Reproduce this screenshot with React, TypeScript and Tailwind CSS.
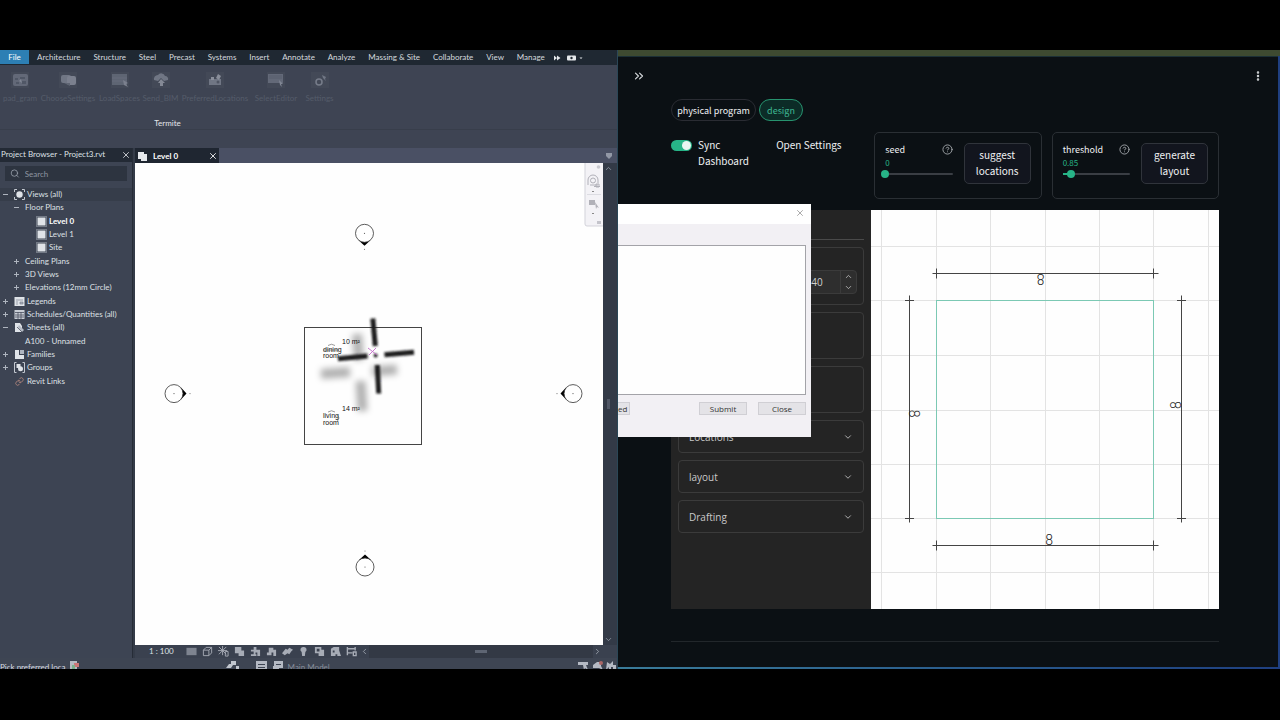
import { useState, type ReactNode } from "react";
import {
  ChevronDown,
  ChevronLeft,
  ChevronRight,
  ChevronUp,
  ChevronsRight,
  CircleQuestionMark,
  EllipsisVertical,
  Link,
  Search,
  X,
} from "lucide-react";

const menus = [
  "Architecture",
  "Structure",
  "Steel",
  "Precast",
  "Systems",
  "Insert",
  "Annotate",
  "Analyze",
  "Massing & Site",
  "Collaborate",
  "View",
  "Manage",
];

type Glyph =
  | "grid"
  | "chat"
  | "table"
  | "cloud"
  | "pin"
  | "screen"
  | "gear";

const tools: { label: string; glyph: Glyph; width: string }[] = [
  { label: "pad_gram", glyph: "grid", width: "w-[38px]" },
  { label: "ChooseSettings", glyph: "chat", width: "w-[58px]" },
  { label: "LoadSpaces", glyph: "table", width: "w-[45px]" },
  { label: "Send_BIM", glyph: "cloud", width: "w-[37px]" },
  { label: "PreferredLocations", glyph: "pin", width: "w-[72px]" },
  { label: "SelectEditor", glyph: "screen", width: "w-[50px]" },
  { label: "Settings", glyph: "gear", width: "w-[37px]" },
];

function ToolGlyph({ glyph }: { glyph: Glyph }) {
  return (
    <svg viewBox="0 0 18 16" className="h-4 w-[18px] opacity-80" fill="#7d8391">
      <rect width="18" height="16" fill="#454b59" />
      {glyph === "grid" && (
        <>
          <rect x="2" y="2" width="15" height="12" rx="2" fill="#6d7382" />
          <path d="M4 6h3v2H4zM9 5h5v2H9zM5 10h3v2H5zM11 9h4v3h-4z" fill="#555c6b" />
          <path d="M8 9l2-2 1 4z" fill="#9298a5" />
        </>
      )}
      {glyph === "chat" && (
        <>
          <rect x="2" y="3" width="10" height="8" rx="2" />
          <rect x="8" y="4" width="9" height="9" rx="2" fill="#8b909d" />
          <path d="M5 11h6v3z" fill="#686e7c" />
        </>
      )}
      {glyph === "table" && (
        <>
          <rect x="1" y="2" width="15" height="11" fill="#676e7c" />
          <path d="M1 6h15M1 9h15" stroke="#757b89" strokeWidth=".7" />
          <path d="M12 8l5 3-2 1 2 3-4-2z" fill="#8b909d" />
        </>
      )}
      {glyph === "cloud" && (
        <>
          <path d="M2 8a4 4 0 014-5 4 4 0 017 1 3 3 0 013 4l-4 1-3-3-3 3z" />
          <path d="M9 7l4 4h-2v3H8v-3H6z" fill="#969ba6" />
        </>
      )}
      {glyph === "pin" && (
        <>
          <rect x="3" y="7" width="12" height="6" />
          <path d="M5 5h3v3H5zM12 2l3 2-2 4-3-2z" fill="#9ca1ac" />
          <circle cx="12" cy="10" r="1.5" fill="#545a68" />
        </>
      )}
      {glyph === "screen" && (
        <>
          <rect x="1" y="2" width="15" height="9" fill="#6d7382" />
          <path d="M2 4h13M2 6h13" stroke="#5f6573" />
          <path d="M12 8l4 4-2 0 1 3-2-2z" fill="#9298a5" />
        </>
      )}
      {glyph === "gear" && (
        <>
          <circle cx="8" cy="10" r="3" fill="none" stroke="#858b98" strokeWidth="1.5" />
          <path d="M11 3l4 2-1 2 1 2-3-3z" />
        </>
      )}
    </svg>
  );
}

function MenuBar() {
  return (
    <nav className="flex h-[15px] items-start bg-[#1f2832] text-[8px] leading-[15px] text-[#d5d9de]">
      <button className="h-[14px] w-[29px] bg-[#2d7fb4] text-white">File</button>
      <div className="flex flex-1 justify-between pl-2 pr-2">
        {menus.map((m) => (
          <button key={m} className="whitespace-nowrap">
            {m}
          </button>
        ))}
      </div>
      <div className="flex h-full items-center gap-[5px] pr-[33px]">
        <svg viewBox="0 0 8 6" className="h-[6px] w-2" fill="#e5e8eb">
          <path d="M1 .5L4 3 1 5.500zM4 .5L7.500 3 4 5.500z" />
        </svg>
        <svg viewBox="0 0 18 6" className="h-[6px] w-[18px]">
          <rect x="1" y=".5" width="9" height="5" rx="1" fill="#e5e8eb" />
          <circle cx="5.500" cy="3" r="1.200" fill="#1f2832" />
          <path d="M13.500 2.500h3L15 4z" fill="#e5e8eb" />
        </svg>
      </div>
    </nav>
  );
}

function Ribbon() {
  return (
    <section className="flex h-[83px] flex-col bg-[#3e4453]">
      <div className="flex h-[65px] flex-col border-b border-[#383e4b]">
        <div className="flex flex-1 pl-px pt-[7px]">
          {tools.map((t) => (
            <button
              key={t.label}
              className={`flex flex-col items-center text-[8px] leading-[10px] text-[#555c6a] ${t.width}`}
            >
              <ToolGlyph glyph={t.glyph} />
              <span className="mt-[5px]">{t.label}</span>
            </button>
          ))}
        </div>
        <div className="w-[335px] text-center text-[8px] leading-[11px] text-[#e3e6ea]">Termite</div>
      </div>
    </section>
  );
}

type NodeIcon = "views" | "plan" | "legend" | "schedule" | "sheet" | "family" | "group" | "link";

const tree: { label: string; level: 0 | 1 | 2; mark?: "+" | "-"; icon?: NodeIcon; bold?: boolean }[] = [
  { label: "Views (all)", level: 0, mark: "-", icon: "views" },
  { label: "Floor Plans", level: 1, mark: "-" },
  { label: "Level 0", level: 2, icon: "plan", bold: true },
  { label: "Level 1", level: 2, icon: "plan" },
  { label: "Site", level: 2, icon: "plan" },
  { label: "Ceiling Plans", level: 1, mark: "+" },
  { label: "3D Views", level: 1, mark: "+" },
  { label: "Elevations (12mm Circle)", level: 1, mark: "+" },
  { label: "Legends", level: 0, mark: "+", icon: "legend" },
  { label: "Schedules/Quantities (all)", level: 0, mark: "+", icon: "schedule" },
  { label: "Sheets (all)", level: 0, mark: "-", icon: "sheet" },
  { label: "A100 - Unnamed", level: 1 },
  { label: "Families", level: 0, mark: "+", icon: "family" },
  { label: "Groups", level: 0, mark: "+", icon: "group" },
  { label: "Revit Links", level: 0, icon: "link" },
];

const indent = { 0: "pl-[2px]", 1: "pl-[13px]", 2: "pl-[25px]" };

function TreeIcon({ icon }: { icon: NodeIcon }) {
  if (icon === "link") return <Link className="mx-[1px] h-[9px] w-[9px] text-[#c08f83]" />;
  return (
    <svg viewBox="0 0 11 11" className="h-[11px] w-[11px] shrink-0" fill="#dfe3e8">
      {icon === "views" && (
        <>
          <circle cx="5.500" cy="5.500" r="3.200" />
          <path d="M.5 3V.5H3M8 .5h2.500V3M10.500 8v2.500H8M3 10.500H.5V8" fill="none" stroke="#c3c8d0" />
        </>
      )}
      {icon === "plan" && (
        <>
          <rect x="1.500" y="1.500" width="8" height="8" />
          <rect x=".5" y=".5" width="10" height="10" fill="none" stroke="#aab0ba" strokeDasharray="1 1" />
        </>
      )}
      {icon === "legend" && (
        <>
          <rect x=".5" y="1" width="10" height="9" />
          <path d="M2 4h7M2 6h2M2 8h2M6 6h3v2H6z" stroke="#7b8290" strokeWidth=".7" fill="#aab0ba" />
        </>
      )}
      {icon === "schedule" && (
        <>
          <rect x=".5" y="1" width="10" height="9" fill="#c9ced6" />
          <path d="M1 3.500h9M1 6h9M1 8h9M4 3v7M7 3v7" stroke="#4b5261" strokeWidth=".8" />
        </>
      )}
      {icon === "sheet" && (
        <>
          <path d="M1 1h5l2 3v6H1z" />
          <path d="M5 3l5 5-2 2-4-5z" fill="#b5bbc5" />
          <path d="M3 5l5 5" stroke="#4b5261" strokeWidth=".8" />
        </>
      )}
      {icon === "family" && (
        <>
          <path d="M1 1h4v5h5v4H1z" />
          <rect x="6" y="1" width="4" height="4" fill="#aeb5c0" />
        </>
      )}
      {icon === "group" && (
        <>
          <path d="M2.500 .5h-2v10h2M8.500 .5h2v10h-2" fill="none" stroke="#c3c8d0" />
          <rect x="2.500" y="2" width="4" height="4" />
          <circle cx="6.500" cy="6.800" r="2.500" />
        </>
      )}
    </svg>
  );
}

function ProjectBrowser() {
  return (
    <aside className="flex w-[133px] shrink-0 flex-col border-r border-[#262c37] bg-[#3d4453] text-[8px] text-[#dde0e5]">
      <header className="flex h-[14px] items-start justify-between bg-[#232a35] px-px leading-[13px]">
        <span className="whitespace-nowrap">Project Browser - Project3.rvt</span>
        <button aria-label="Close project browser" className="pt-[2px]">
          <X className="h-[10px] w-[10px]" />
        </button>
      </header>
      <label className="mx-[5px] mt-1 flex h-[15px] items-center gap-[5px] bg-[#2d3440] pl-[5px]">
        <Search className="h-[11px] w-[11px] text-[#9aa1ad]" />
        <input
          type="text"
          aria-label="Search"
          placeholder="Search"
          className="w-full bg-transparent leading-[14px] outline-none placeholder:text-[#8e95a1]"
        />
      </label>
      <ul className="mt-[7px] flex h-[200px] flex-col">
        {tree.map((n, i) => (
          <li
            key={n.label}
            className={`flex min-h-0 flex-1 items-center leading-[13px] ${indent[n.level]} ${i === 0 ? "bg-[#363d4a]" : ""}`}
          >
            {n.level < 2 && (
              <svg viewBox="0 0 7 7" className="mr-[5px] h-[7px] w-[7px] shrink-0" stroke="#aeb4be">
                {n.mark && <path d="M1 3.500h5" />}
                {n.mark === "+" && <path d="M3.500 1v5" />}
              </svg>
            )}
            {n.icon && (
              <span className={n.level === 2 ? "ml-[11px] mr-[2px]" : "mr-[2px]"}>
                <TreeIcon icon={n.icon} />
              </span>
            )}
            <span className={`whitespace-nowrap ${n.bold ? "font-bold text-white" : ""}`}>{n.label}</span>
          </li>
        ))}
      </ul>
    </aside>
  );
}

function Elevation({ x, y, turn }: { x: number; y: number; turn: number }) {
  return (
    <g transform={`translate(${x} ${y}) rotate(${turn})`}>
      <path d="M-6 7Q0 8 6 7L0 12.500z" fill="#000" />
      <circle r="9" fill="#fff" stroke="#333" strokeWidth=".8" />
      <circle r=".6" fill="#555" />
      <circle cy="16" r=".6" fill="#777" />
    </g>
  );
}

function PlanCanvas() {
  return (
    <svg
      viewBox="135 163 468 482"
      preserveAspectRatio="xMidYMid meet"
      className="block min-h-[482px] w-full flex-1 bg-[#fefefe]"
      role="img"
      aria-label="Level 0 floor plan"
    >
      <defs>
        <filter id="soft" x="-50%" y="-50%" width="200%" height="200%">
          <feGaussianBlur stdDeviation="3" />
        </filter>
        <filter id="edge" x="-50%" y="-50%" width="200%" height="200%">
          <feGaussianBlur stdDeviation="0.900" />
        </filter>
      </defs>
      <Elevation x={364.5} y={233.300} turn={0} />
      <Elevation x={174} y={393.600} turn={-90} />
      <Elevation x={573} y={393.600} turn={90} />
      <Elevation x={365} y={567} turn={180} />
      <rect x="304.500" y="327.500" width="117" height="117" fill="none" stroke="#444" />
      <g filter="url(#soft)" stroke="#000" strokeOpacity=".3" strokeWidth="10">
        <path d="M357 334L359 360M360.500 381L362.500 411M321 374L350 372M372 371.500L397 369.500" />
      </g>
      <g filter="url(#edge)" stroke="#1a1a1c" strokeWidth="5">
        <path d="M372.800 318.500L375.300 346M377.300 365L378.700 393.500M338 358.800L367.500 356M384.500 354.800L414 352.300" />
        <circle cx="375.600" cy="355.500" r="1" strokeWidth="2" />
      </g>
      <path d="M368 348l9 7M376 348l-7 7" stroke="#c26bc8" strokeWidth=".9" />
      <g fill="#111" fontFamily="'Liberation Sans Narrow', 'Liberation Sans', sans-serif" fontSize="7">
        <text x="342" y="343.500">10 m²</text>
        <text x="323" y="351.500">dining</text>
        <text x="323" y="357.500">room</text>
        <text x="342" y="410.500">14 m²</text>
        <text x="323" y="418">living</text>
        <text x="323" y="424.500">room</text>
      </g>
      <g fill="none" stroke="#555" strokeWidth=".6">
        <path d="M328 345.500Q331.500 343 335 345.500M323 350h16M328 412Q331.500 409.500 335 412M337.500 415q3 3 0 6" />
      </g>
      <g>
        <rect x="585" y="160" width="20" height="66" rx="2" fill="#f3f2f6" stroke="#d3d3da" />
        <circle cx="598.500" cy="167" r="1.800" fill="#c9c9d0" />
        <g fill="none" stroke="#b0b0b8">
          <path d="M588 185v-5a5 5 0 0110 0v3M590 185h8" />
          <circle cx="593" cy="180.500" r="2.500" />
          <path d="M594 186.500h6M596 184h3v3h-3z" />
        </g>
        <path d="M587 194.500h14" stroke="#dcdce2" />
        <path d="M589 200h6v5h-6zM595 202l4 6-2-1-1 2z" fill="#b1b1b8" />
        <path d="M592 191h2v1h-2zM592 213h2v1h-2z" fill="#888" />
        <rect x="597" y="221" width="4" height="3" fill="#c4c4cb" />
      </g>
    </svg>
  );
}

const viewControls: ReactNode[] = [
  <rect key="a" x=".5" y="2" width="11" height="8" fill="#7e8490" />,
  <path key="b" d="M1.500 4.500h6v6h-6zM1.500 4.500l3-3h6l-3 3M10.500 1.500v6l-3 3" stroke="#a7acb6" fill="none" />,
  <path key="c" d="M5 0v10M0 5h10M1 1l8 8M9 1L1 9M8 6h3v5H8z" stroke="#a7acb6" fill="none" />,
  <path key="d" d="M1 1h7v7H1zM7 5h4v6H5V8h2z" />,
  <path key="e" d="M4 1h3v3h4v7H8V7H6v2h1v2H1V9h3V6H1V4h3z" />,
  <path key="f" d="M3 2h5v2h3v7H8V7H6v3H1V7h2z" />,
  <path key="g" d="M0 8l4-5 2 1 2-2 4 2-2 2-2 3-2-1-3 2z" />,
  <path key="h" d="M6 1a3 3 0 012 5.500L7.500 11h-3L4 6.500A3 3 0 016 1z" />,
  <path key="i" d="M1 1h7v3h3v7H5V8H1zM3 3v3h3V3z" fillRule="evenodd" />,
  <path key="j" d="M1 3l3-2h6v4l2 6H8V9H6v2H1zM3 5v2h2V5z" fillRule="evenodd" />,
  <path key="k" d="M1.500 1v9M1 3h9M1 7.500h6M10 1v4M8 6.500h3v4H8z" stroke="#a7acb6" strokeWidth="1.500" fill="none" />,
];

function ViewBar() {
  return (
    <div className="flex h-[13px] items-center bg-[#3a414f] text-[8px] leading-[13px] text-[#dfe2e7]">
      <span className="w-[51px] pl-[14px]">1 : 100</span>
      <div className="flex gap-1">
        {viewControls.map((g, i) => (
          <button key={i} aria-label={`View control ${i + 1}`} className="h-3 w-3">
            <svg viewBox="0 0 12 12" className="h-[11px] w-[11px]" fill="#a7acb6">
              {g}
            </svg>
          </button>
        ))}
      </div>
      <div className="flex h-full flex-1 items-center justify-between pl-[2px] pr-[15px] text-[#aab0ba]">
        <ChevronLeft className="h-[9px] w-[9px]" />
        <span className="h-full flex-1 bg-[#333945] pt-[5px]">
          <span className="mx-auto block h-[3px] w-3 bg-[#5e6573]" />
        </span>
        <ChevronRight className="h-[9px] w-[9px]" />
      </div>
    </div>
  );
}

function StatusBar() {
  return (
    <footer className="flex h-[11px] items-start overflow-hidden bg-[#3e4553] pt-[3px] text-[8px] leading-[12px] text-[#d7dae0]">
      <span className="whitespace-nowrap">Pick preferred loca</span>
      <svg viewBox="0 0 11 10" className="ml-[3px] h-[10px] w-[11px]">
        <path d="M1 0h7v9H1z" fill="#b6bac2" />
        <path d="M5 2h5v4H5z" fill="#c77" />
        <path d="M3 4h3v4H3z" fill="#7ab08c" />
      </svg>
      <svg viewBox="0 0 14 10" className="ml-[146px] h-[10px] w-[14px]" fill="#c1c6ce">
        <path d="M5 0h5v4H7L5 7H0l3-4h2zM10 5h3v4h-3z" />
      </svg>
      <svg viewBox="0 0 28 10" className="ml-[16px] h-[10px] w-7" fill="#b5bac4">
        <path d="M0 0h11v9H0zM2 3h7v1H2zM2 6h7v1H2zM18 0h9v7h-4v2h-6V5h1zM20 3h5v1h-5z" fillRule="evenodd" />
      </svg>
      <span className="ml-1 flex-1 text-[#868d9a]">Main Model</span>
      <svg viewBox="0 0 46 10" className="h-[10px] w-[46px]" fill="#b5bac4">
        <path d="M7 1h10v3h-2l2 5-3-2-1 2-1-5H7zM22 4l4-3h4v4l2 4-4-2h-6zM36 1l3 2 3-3v4h3v5h-3V6h-2v3h-2V6l-3 3z" />
        <circle cx="30" cy="2" r="2" fill="#a66" />
      </svg>
    </footer>
  );
}

function ModelingApp() {
  return (
    <section className="flex min-w-0 flex-col overflow-hidden bg-[#343b48] font-[Lato,sans-serif]">
      <MenuBar />
      <Ribbon />
      <div className="flex flex-1">
        <ProjectBrowser />
        <div className="flex min-w-0 flex-1 flex-col pl-[2px]">
          <div className="flex h-[15px] items-center justify-between bg-[#4a5064] pr-[5px]">
            <div className="flex h-full w-[84px] items-center bg-[#1f2631] pl-[3px] text-[8px] font-bold text-white">
              <svg viewBox="0 0 10 10" className="mr-[5px] h-[10px] w-[10px]" fill="#e6e9ed">
                <path d="M0 1h6v2h3v7H3V8H0z" />
              </svg>
              <span className="flex-1">Level 0</span>
              <button aria-label="Close Level 0" className="mr-px">
                <X className="h-[10px] w-[10px]" />
              </button>
            </div>
            <svg viewBox="0 0 6 6" className="h-[6px] w-[6px]" fill="#9298a6">
              <path d="M0 0h6v3L3 6 0 3z" />
            </svg>
          </div>
          <div className="flex flex-1">
            <PlanCanvas />
            <div className="flex w-[14px] shrink-0 flex-col items-center justify-between bg-[#333a47] py-[1px] pr-[3px] text-[#9aa1ad]">
              <ChevronUp className="h-[9px] w-[9px]" />
              <span className="h-[10px] w-[3px] bg-[#505766]" />
              <ChevronDown className="h-[9px] w-[9px]" />
            </div>
          </div>
          <ViewBar />
        </div>
      </div>
      <StatusBar />
    </section>
  );
}

function SliderCard({
  id,
  label,
  initial,
  max,
  step,
  action,
}: {
  id: string;
  label: string;
  initial: number;
  max: number;
  step: number;
  action: string;
}) {
  const [value, setValue] = useState(initial);
  return (
    <div className="flex gap-[11px] rounded-[5px] border border-[#2a2f34] px-[10px] pb-[14px] pt-[10px]">
      <div className="flex min-w-0 flex-1 flex-col">
        <div className="flex items-center justify-between text-[9px] leading-[13px] text-[#f0f1f3]">
          <label htmlFor={id}>{label}</label>
          <CircleQuestionMark className="h-[11px] w-[11px] text-[#a4a8ad]" />
        </div>
        <span className="text-[8px] leading-[13px] text-[#27b487]">{value}</span>
        <div className="relative mt-px flex h-2 items-center">
          <div className="h-[2px] w-full rounded bg-[#3a3e44]">
            <div className="h-full bg-[#27b487]" style={{ width: `${(value / max) * 100}%` }} />
          </div>
          <input
            id={id}
            type="range"
            min={0}
            max={max}
            step={step}
            value={value}
            onChange={(e) => setValue(Number(e.target.value))}
            className="absolute inset-y-0 -left-1 h-2 w-[calc(100%+8px)] appearance-none bg-transparent [&::-webkit-slider-thumb]:h-2 [&::-webkit-slider-thumb]:w-2 [&::-webkit-slider-thumb]:appearance-none [&::-webkit-slider-thumb]:rounded-full [&::-webkit-slider-thumb]:bg-[#27b487]"
          />
        </div>
      </div>
      <button className="h-[41px] w-[67px] shrink-0 rounded-[5px] border border-[#30343b] bg-[#12151e] px-2 pb-px text-[10px] leading-[16px] text-[#f0f1f3]">
        {action}
      </button>
    </div>
  );
}

function Controls() {
  return (
    <div className="mt-[11px] grid grid-cols-[92fr_91fr_167fr_167fr] gap-[10px] text-[10px] leading-[16px] text-[#f0f1f3]">
      <label className="flex items-start gap-[6px] pt-[5px]">
        <input type="checkbox" role="switch" defaultChecked className="peer sr-only" />
        <span className="mt-[3px] flex h-[11px] w-[21px] shrink-0 justify-start rounded-full bg-[#4a4f55] p-[1px] peer-checked:justify-end peer-checked:bg-[#27b487]">
          <span className="h-[9px] w-[9px] rounded-full bg-[#e9f5f1]" />
        </span>
        <span>Sync Dashboard</span>
      </label>
      <button className="self-start whitespace-nowrap pl-[3px] pt-[5px] text-left">Open Settings</button>
      <SliderCard id="seed" label="seed" initial={0} max={100} step={1} action="suggest locations" />
      <SliderCard id="threshold" label="threshold" initial={0.85} max={6.5} step={0.05} action="generate layout" />
    </div>
  );
}

const sections = ["Locations", "layout", "Drafting"];

function Sidebar() {
  return (
    <aside className="flex w-[200px] shrink-0 flex-col gap-[7px] bg-[#242424] px-[7px] font-['Open_Sans',sans-serif] text-[#c9c9c9]">
      <div className="h-[30px] border-b border-[#4a4a4a]" />
      <div className="flex h-[58px] items-center justify-end rounded-[4px] border border-[#3b3b3b] px-[6px] pt-3">
        <div className="flex h-6 w-[68px] overflow-hidden rounded-[4px] border border-[#3b3b3b] bg-[#2e2e2e]">
          <input
            aria-label="Value"
            type="text"
            inputMode="decimal"
            defaultValue="0.40"
            className="w-[50px] bg-transparent pl-[13px] text-[10px] leading-[14px] text-[#d0d0d0] outline-none"
          />
          <div className="flex flex-1 flex-col items-center justify-around border-l border-[#3b3b3b]">
            <button aria-label="Increase">
              <ChevronUp className="h-[9px] w-[9px]" />
            </button>
            <button aria-label="Decrease">
              <ChevronDown className="h-[9px] w-[9px]" />
            </button>
          </div>
        </div>
      </div>
      <div className="h-[47px] rounded-[4px] border border-[#3b3b3b]" />
      <div className="h-[47px] rounded-[4px] border border-[#3b3b3b]" />
      {sections.map((s) => (
        <button
          key={s}
          className="flex h-[33px] items-center justify-between rounded-[4px] border border-[#3b3b3b] px-[10px] text-[10px] leading-[14px]"
        >
          {s}
          <ChevronDown className="h-[10px] w-[10px]" />
        </button>
      ))}
    </aside>
  );
}

const gridX = [10.5, 65.5, 119.5, 174.5, 228.5, 282.5, 337.5];
const gridY = [36.5, 90.5, 145.5, 200.5, 254.5, 308.5, 362.5];

function LayoutCanvas() {
  return (
    <svg viewBox="0 0 348 399" className="block h-auto min-w-0 flex-1 bg-[#fefefe]" role="img" aria-label="Layout drawing">
      <g stroke="#e3e3e3">
        {gridX.map((x) => (
          <path key={x} d={`M${x} 0V399`} />
        ))}
        {gridY.map((y) => (
          <path key={y} d={`M0 ${y}H348`} />
        ))}
      </g>
      <rect x="65.500" y="90.500" width="217" height="218" fill="none" stroke="#7cc9b4" />
      <g stroke="#444">
        <path d="M61.500 63.500H287.500M65.500 58.500v10M282.500 58.500v10" />
        <path d="M61.500 335.500H287.500M65.500 330.500v10M282.500 330.500v10" />
        <path d="M38.500 85.500V312.500M34 90.500h9M34 308.500h9" />
        <path d="M310.500 85.500V312.500M306 90.500h9M306 308.500h9" />
      </g>
      <g fill="#222" fontFamily="Roboto, sans-serif" fontSize="14" fontWeight="300" textAnchor="middle">
        <text transform="translate(169.500 64) rotate(180)">8</text>
        <text transform="translate(38 203.500) rotate(90)">8</text>
        <text transform="translate(310 195) rotate(-90)">8</text>
        <text transform="translate(178 335)">8</text>
      </g>
    </svg>
  );
}

function Dialog() {
  return (
    <div
      role="dialog"
      aria-label="Preferred locations"
      className="absolute left-0 top-[147px] flex h-[233px] w-[193px] flex-col bg-[#f2f0f4] font-['Open_Sans',sans-serif] text-[8px] text-[#333]"
    >
      <div className="flex h-5 items-start justify-end bg-white pr-[6px] pt-1">
        <button aria-label="Close dialog">
          <X className="h-[10px] w-[10px] text-[#9a9a9a]" strokeWidth={2} />
        </button>
      </div>
      <div className="mr-[5px] mt-[21px] h-[150px] border border-l-0 border-[#a3a3a8] bg-[#fefefe]" />
      <div className="mr-[5px] mt-[7px] flex leading-[10px]">
        <button className="h-[13px] w-[12px] border border-l-0 border-[#d0cfd4] bg-[#e4e3e7] text-left">ed</button>
        <button className="ml-auto h-[13px] w-12 border border-[#d0cfd4] bg-[#e4e3e7]">Submit</button>
        <button className="ml-[11px] h-[13px] w-12 border border-[#d0cfd4] bg-[#e4e3e7]">Close</button>
      </div>
    </div>
  );
}

function Dashboard() {
  return (
    <section className="flex min-w-0 flex-col border-l border-[#2b4757] bg-[#1d4a86] font-['Noto_Sans_CJK_SC',sans-serif]">
      <div className="h-[6px] bg-[#3e4a31]" />
      <div className="flex flex-1 flex-col bg-linear-to-r from-[#3a7c9a] to-[#1f3f80] pb-[2px]">
        <div className="relative mr-[2px] flex flex-1 flex-col border-t border-[#1c3036] bg-[#0b1014]">
          <header className="flex h-[38px] items-center justify-between px-[14px] text-[#d5d8db]">
            <button aria-label="Expand sidebar">
              <ChevronsRight className="h-[14px] w-[14px]" />
            </button>
            <button aria-label="More options">
              <EllipsisVertical className="h-[12px] w-[12px]" strokeWidth={3} />
            </button>
          </header>
          <main className="ml-[53px] mr-[59px] mt-1 flex flex-col">
            <div className="flex gap-[3px] text-[9px] leading-[19px]">
              <button className="h-[22px] w-[85px] whitespace-nowrap rounded-full border border-[#2a2c33] text-[#f0f1f3]">
                physical program
              </button>
              <button className="h-[22px] w-11 rounded-full border border-[#27936f] bg-[#0c2c27] text-[#3fb893]">
                design
              </button>
            </div>
            <Controls />
            <div className="mt-[11px] flex">
              <Sidebar />
              <LayoutCanvas />
            </div>
            <hr className="mt-8 border-[#22272b]" />
          </main>
          <Dialog />
        </div>
      </div>
    </section>
  );
}

export default function App() {
  return (
    <div className="flex min-h-screen flex-col bg-black pb-[51px] pt-[50px]">
      <div className="grid flex-1 grid-cols-[617fr_663fr]">
        <ModelingApp />
        <Dashboard />
      </div>
    </div>
  );
}
